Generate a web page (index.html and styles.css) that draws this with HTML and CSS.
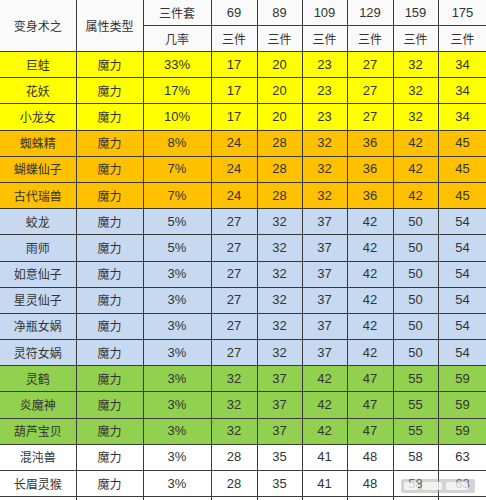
FILE: index.html
```html
<!DOCTYPE html>
<html lang="zh">
<head>
<meta charset="utf-8">
<link rel="stylesheet" href="styles.css">
</head>
<body>
<div class="wrap">
<table class="grid">
<colgroup>
<col class="c1"><col class="c2"><col class="c3"><col class="c4"><col class="c5"><col class="c6"><col class="c7"><col class="c8"><col class="c9">
</colgroup>
<thead>
<tr class="h"><th rowspan="2" class="first">变身术之</th><th rowspan="2">属性类型</th><th>三件套</th><th class="n">69</th><th class="n">89</th><th class="n">109</th><th class="n">129</th><th class="n">159</th><th class="n">175</th></tr>
<tr class="h"><th>几率</th><th>三件</th><th>三件</th><th>三件</th><th>三件</th><th>三件</th><th>三件</th></tr>
</thead>
<tbody>
<tr class="y"><td class="first">巨蛙</td><td>魔力</td><td class="n">33%</td><td class="n">17</td><td class="n">20</td><td class="n">23</td><td class="n">27</td><td class="n">32</td><td class="n">34</td></tr>
<tr class="y"><td class="first">花妖</td><td>魔力</td><td class="n">17%</td><td class="n">17</td><td class="n">20</td><td class="n">23</td><td class="n">27</td><td class="n">32</td><td class="n">34</td></tr>
<tr class="y"><td class="first">小龙女</td><td>魔力</td><td class="n">10%</td><td class="n">17</td><td class="n">20</td><td class="n">23</td><td class="n">27</td><td class="n">32</td><td class="n">34</td></tr>
<tr class="o"><td class="first">蜘蛛精</td><td>魔力</td><td class="n">8%</td><td class="n">24</td><td class="n">28</td><td class="n">32</td><td class="n">36</td><td class="n">42</td><td class="n">45</td></tr>
<tr class="o"><td class="first">蝴蝶仙子</td><td>魔力</td><td class="n">7%</td><td class="n">24</td><td class="n">28</td><td class="n">32</td><td class="n">36</td><td class="n">42</td><td class="n">45</td></tr>
<tr class="o"><td class="first">古代瑞兽</td><td>魔力</td><td class="n">7%</td><td class="n">24</td><td class="n">28</td><td class="n">32</td><td class="n">36</td><td class="n">42</td><td class="n">45</td></tr>
<tr class="b"><td class="first">蛟龙</td><td>魔力</td><td class="n">5%</td><td class="n">27</td><td class="n">32</td><td class="n">37</td><td class="n">42</td><td class="n">50</td><td class="n">54</td></tr>
<tr class="b"><td class="first">雨师</td><td>魔力</td><td class="n">5%</td><td class="n">27</td><td class="n">32</td><td class="n">37</td><td class="n">42</td><td class="n">50</td><td class="n">54</td></tr>
<tr class="b"><td class="first">如意仙子</td><td>魔力</td><td class="n">3%</td><td class="n">27</td><td class="n">32</td><td class="n">37</td><td class="n">42</td><td class="n">50</td><td class="n">54</td></tr>
<tr class="b"><td class="first">星灵仙子</td><td>魔力</td><td class="n">3%</td><td class="n">27</td><td class="n">32</td><td class="n">37</td><td class="n">42</td><td class="n">50</td><td class="n">54</td></tr>
<tr class="b"><td class="first">净瓶女娲</td><td>魔力</td><td class="n">3%</td><td class="n">27</td><td class="n">32</td><td class="n">37</td><td class="n">42</td><td class="n">50</td><td class="n">54</td></tr>
<tr class="b"><td class="first">灵符女娲</td><td>魔力</td><td class="n">3%</td><td class="n">27</td><td class="n">32</td><td class="n">37</td><td class="n">42</td><td class="n">50</td><td class="n">54</td></tr>
<tr class="g"><td class="first">灵鹤</td><td>魔力</td><td class="n">3%</td><td class="n">32</td><td class="n">37</td><td class="n">42</td><td class="n">47</td><td class="n">55</td><td class="n">59</td></tr>
<tr class="g"><td class="first">炎魔神</td><td>魔力</td><td class="n">3%</td><td class="n">32</td><td class="n">37</td><td class="n">42</td><td class="n">47</td><td class="n">55</td><td class="n">59</td></tr>
<tr class="g"><td class="first">葫芦宝贝</td><td>魔力</td><td class="n">3%</td><td class="n">32</td><td class="n">37</td><td class="n">42</td><td class="n">47</td><td class="n">55</td><td class="n">59</td></tr>
<tr class="w"><td class="first">混沌兽</td><td>魔力</td><td class="n">3%</td><td class="n">28</td><td class="n">35</td><td class="n">41</td><td class="n">48</td><td class="n">58</td><td class="n">63</td></tr>
<tr class="w"><td class="first">长眉灵猴</td><td>魔力</td><td class="n">3%</td><td class="n">28</td><td class="n">35</td><td class="n">41</td><td class="n">48</td><td class="n">58</td><td class="n">63</td></tr>
<tr class="w"><td class="first">&nbsp;</td><td></td><td></td><td></td><td></td><td></td><td></td><td></td><td></td></tr>
</tbody>
</table>
<div class="mark" aria-hidden="true"><span class="blob b1"></span><span class="blob b2"></span><span class="blob b3"></span></div>
</div>
</body>
</html>
```

FILE: styles.css
```css
html, body {
  margin: 0;
  padding: 0;
  background: #ffffff;
}
.wrap {
  position: relative;
  width: 486px;
  height: 500px;
  overflow: hidden;
}
.grid {
  border-collapse: collapse;
  table-layout: fixed;
  width: 487px;
  font-family: "Noto Sans CJK SC", "Noto Sans", sans-serif;
  font-size: 12px;
  color: #333333;
}
.c1 { width: 76px; }
.c2 { width: 67px; }
.c3 { width: 68px; }
.c4 { width: 46px; }
.c5 { width: 45px; }
.c6 { width: 45px; }
.c7 { width: 46px; }
.c8 { width: 45px; }
.c9 { width: 49px; }
.grid th, .grid td {
  border: 1px solid #3a3a3a;
  padding: 0;
  text-align: center;
  vertical-align: middle;
  font-weight: normal;
  white-space: nowrap;
  overflow: hidden;
  line-height: 14px;
}
.grid tr:first-child th { border-top: none; }
.grid .first { border-left: none; }
.h th { background: #fafafa; height: 25px; }
tbody tr { height: 26.2px; }
.n {
  font-family: "Liberation Sans", "Noto Sans", sans-serif;
  font-size: 13px;
}
.y td { background: #ffff00; }
.o td { background: #ffc000; }
.b td { background: #c6d9f1; }
.g td { background: #92d050; }
.w td { background: #ffffff; }
.mark {
  position: absolute;
  left: 401px;
  top: 479px;
  width: 74px;
  height: 14px;
  display: flex;
  align-items: center;
  gap: 4px;
  padding: 0 3px;
  box-sizing: border-box;
  background: rgba(160,160,160,0.45);
  border-radius: 2px;
}
.blob {
  display: block;
  height: 8px;
  border-radius: 2px;
  background: rgba(255,255,255,0.7);
}
.b1 { width: 14px; }
.b2 { width: 20px; }
.b3 { width: 22px; }
```
